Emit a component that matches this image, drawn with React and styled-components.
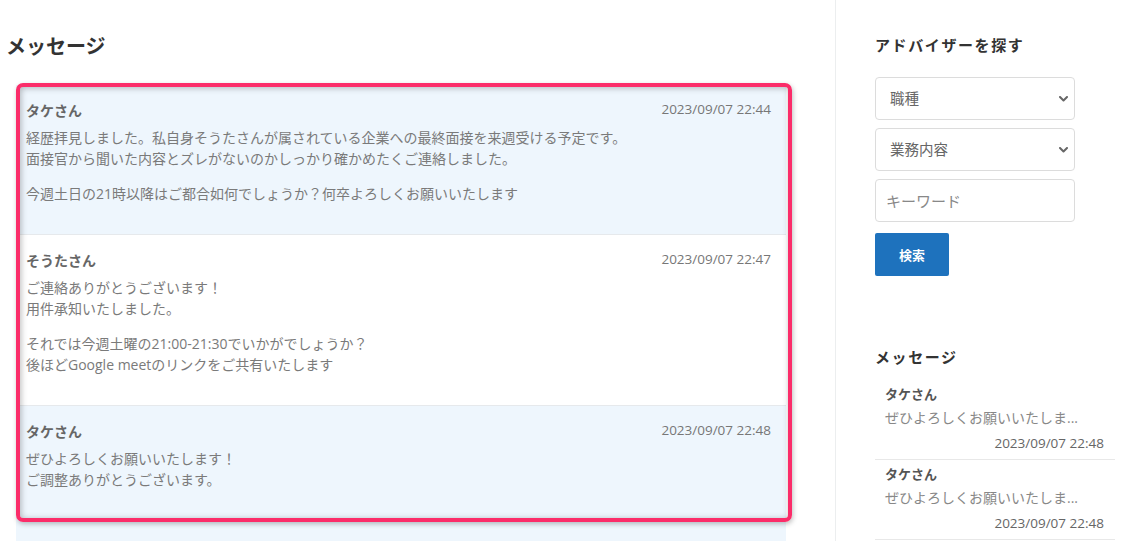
import React from "react";
import styled, { createGlobalStyle } from "styled-components";

const GlobalStyle = createGlobalStyle`
  html, body { margin: 0; padding: 0; background: #fff; }
  body {
    font-family: "Open Sans", "Noto Sans CJK JP", sans-serif;
    color: #333;
    overflow: hidden;
  }
  * { box-sizing: border-box; }
`;

const Page = styled.div`
  display: flex;
  width: 1121px;
  min-height: 541px;
`;

const Main = styled.main`
  flex: 0 0 835px;
  padding-top: 32px;
`;

const Title = styled.h1`
  margin: 0 0 23px 6px;
  font-size: 20px;
  line-height: 30px;
  font-weight: 700;
  color: #333;
`;

const ListWrap = styled.div`
  position: relative;
  margin-left: 16px;
  width: 770px;
`;

const Highlight = styled.div`
  position: absolute;
  top: -2px;
  left: 0;
  width: 776px;
  height: 439px;
  border: 4px solid #fb2c69;
  border-radius: 7px;
  box-shadow: 1px 2px 5px rgba(0, 0, 0, 0.25), inset 1px 1px 6px rgba(0, 0, 0, 0.28);
  pointer-events: none;
`;

const Row = styled.article`
  background: ${(p) => (p.$tint ? "#eef6fd" : "#fff")};
  border-bottom: 1px solid #e6e9ec;
  padding: 15px 15px 16px 10px;
  min-height: ${(p) => p.$minH || 0}px;
`;

const RowHead = styled.div`
  display: flex;
  justify-content: space-between;
  align-items: flex-start;
  margin-bottom: 6px;
`;

const Name = styled.span`
  font-size: 14px;
  line-height: 21px;
  font-weight: 700;
  color: #666;
`;

const Stamp = styled.span`
  font-size: 13.5px;
  line-height: 18px;
  color: #777;
`;

const Para = styled.p`
  margin: 0 0 14px;
  font-size: 14px;
  line-height: 21px;
  color: #7a7a7a;
`;

const Side = styled.aside`
  flex: 1;
  border-left: 1px solid #eceeef;
  padding: 34px 6px 0 39px;
`;

const SideHeading = styled.h2`
  margin: 0 0 ${(p) => p.$mb}px;
  font-size: 15px;
  line-height: 22px;
  font-weight: 700;
  letter-spacing: 1.6px;
  color: #333;
`;

const Form = styled.form`
  display: flex;
  flex-direction: column;
  gap: 8px;
  width: 200px;
`;

const SelectBox = styled.div`
  position: relative;
  height: 43px;
`;

const Select = styled.select`
  appearance: none;
  width: 100%;
  height: 100%;
  border: 1px solid #dcdcdc;
  border-radius: 4px;
  background: #fff;
  padding: 0 30px 0 14px;
  font-family: "Open Sans", "Noto Sans CJK JP", sans-serif;
  font-size: 14.5px;
  color: #666;
`;

const Chevron = styled.svg`
  position: absolute;
  right: 7px;
  top: 19px;
  width: 9px;
  height: 6px;
  pointer-events: none;
`;

const Input = styled.input`
  width: 100%;
  height: 43px;
  border: 1px solid #dcdcdc;
  border-radius: 4px;
  padding: 0 10px;
  font-family: "Open Sans", "Noto Sans CJK JP", sans-serif;
  font-size: 15px;
  color: #333;
  &::placeholder { color: #888; }
`;

const Button = styled.button`
  margin-top: 3px;
  width: 74px;
  height: 43px;
  border: none;
  border-radius: 2px;
  background: #1e72bd;
  color: #fff;
  font-family: "Open Sans", "Noto Sans CJK JP", sans-serif;
  font-size: 13px;
  font-weight: 700;
`;

const SideMessages = styled.section`
  margin-top: 70px;
  width: 240px;
`;

const Item = styled.div`
  display: flex;
  flex-direction: column;
  border-bottom: 1px solid #e8e8e8;
  padding: 3px 11px 4px 10px;
`;

const ItemName = styled.span`
  font-size: 13px;
  line-height: 22px;
  font-weight: 700;
  color: #555;
`;

const ItemText = styled.span`
  font-size: 14px;
  line-height: 26px;
  color: #888;
  white-space: nowrap;
`;

const ItemDate = styled.span`
  align-self: flex-end;
  font-size: 13.5px;
  line-height: 24px;
  color: #666;
`;

const messages = [
  {
    name: "タケさん",
    date: "2023/09/07 22:44",
    tint: true,
    paras: [
      ["経歴拝見しました。私自身そうたさんが属されている企業への最終面接を来週受ける予定です。", "面接官から聞いた内容とズレがないのかしっかり確かめたくご連絡しました。"],
      ["今週土日の21時以降はご都合如何でしょうか？何卒よろしくお願いいたします"],
    ],
  },
  {
    name: "そうたさん",
    date: "2023/09/07 22:47",
    tint: false,
    paras: [
      ["ご連絡ありがとうございます！", "用件承知いたしました。"],
      ["それでは今週土曜の21:00-21:30でいかがでしょうか？", "後ほどGoogle meetのリンクをご共有いたします"],
    ],
  },
  {
    name: "タケさん",
    date: "2023/09/07 22:48",
    tint: true,
    minH: 160,
    paras: [["ぜひよろしくお願いいたします！", "ご調整ありがとうございます。"]],
  },
];

const ChevronIcon = () => (
  <Chevron viewBox="0 0 9 6">
    <path d="M1 1 L4.5 4.5 L8 1" fill="none" stroke="#666" strokeWidth="2" strokeLinecap="round" strokeLinejoin="round" />
  </Chevron>
);

export default function App() {
  return (
    <>
      <GlobalStyle />
      <Page>
        <Main>
          <Title>メッセージ</Title>
          <ListWrap>
            {messages.map((m, i) => (
              <Row key={i} $tint={m.tint} $minH={m.minH}>
                <RowHead>
                  <Name>{m.name}</Name>
                  <Stamp>{m.date}</Stamp>
                </RowHead>
                {m.paras.map((lines, j) => (
                  <Para key={j}>
                    {lines.map((l, k) => (
                      <React.Fragment key={k}>
                        {k > 0 && <br />}
                        {l}
                      </React.Fragment>
                    ))}
                  </Para>
                ))}
              </Row>
            ))}
            <Highlight />
          </ListWrap>
        </Main>
        <Side>
          <SideHeading $mb={21}>アドバイザーを探す</SideHeading>
          <Form onSubmit={(e) => e.preventDefault()}>
            <SelectBox>
              <Select defaultValue="">
                <option value="">職種</option>
              </Select>
              <ChevronIcon />
            </SelectBox>
            <SelectBox>
              <Select defaultValue="">
                <option value="">業務内容</option>
              </Select>
              <ChevronIcon />
            </SelectBox>
            <Input placeholder="キーワード" />
            <div>
              <Button type="submit">検索</Button>
            </div>
          </Form>
          <SideMessages>
            <SideHeading $mb={12}>メッセージ</SideHeading>
            {[0, 1].map((i) => (
              <Item key={i}>
                <ItemName>タケさん</ItemName>
                <ItemText>ぜひよろしくお願いいたしま...</ItemText>
                <ItemDate>2023/09/07 22:48</ItemDate>
              </Item>
            ))}
          </SideMessages>
        </Side>
      </Page>
    </>
  );
}
